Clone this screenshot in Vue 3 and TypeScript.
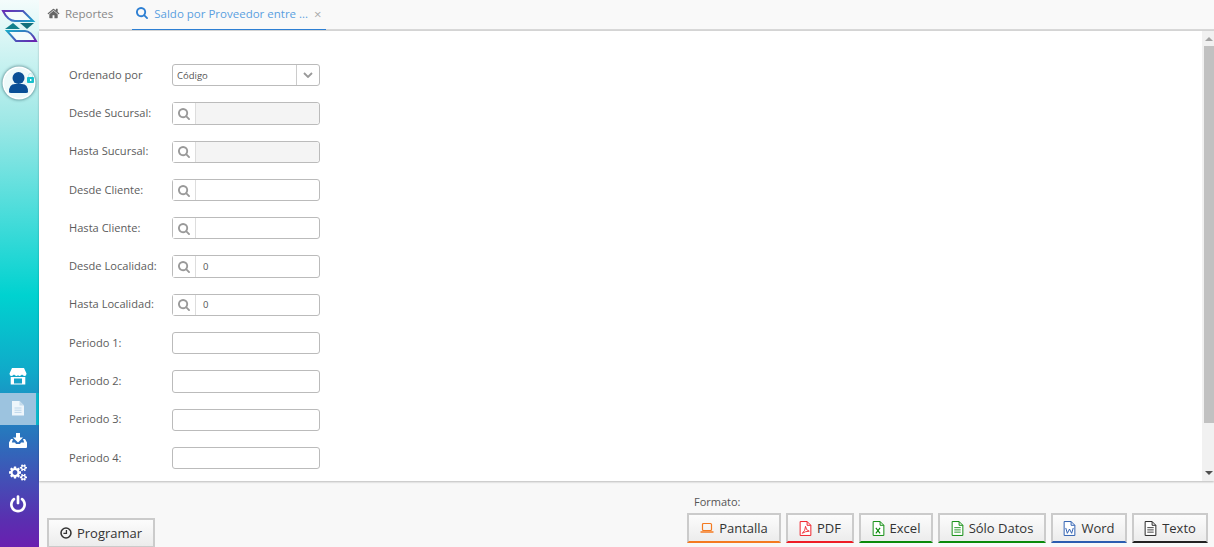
<template>
  <div class="app">
    <aside class="sidebar">
      <svg class="logo" viewBox="0 0 39 44" width="39" height="44">
        <defs>
          <linearGradient id="lg1" x1="0" y1="0" x2="1" y2="1">
            <stop offset="0" stop-color="#6a2bb5" />
            <stop offset="1" stop-color="#1ba0c8" />
          </linearGradient>
          <linearGradient id="lg2" x1="0" y1="0" x2="1" y2="1">
            <stop offset="0" stop-color="#1ba8c8" />
            <stop offset="1" stop-color="#6a22b0" />
          </linearGradient>
        </defs>
        <path d="M3 11 H23 L33 21 H15 Q8 21 3 11 Z" fill="#f4fbfb" stroke="url(#lg1)" stroke-width="2" />
        <path d="M7 31 H25 Q31 31 36 41 H16 Z" fill="#f4fbfb" stroke="url(#lg2)" stroke-width="2" />
        <path d="M5 29 L13 23 L20 29 Z" fill="#12808c" />
        <path d="M20 23 H34 L27 29 Z" fill="#12707c" />
      </svg>
      <div class="avatar">
        <svg viewBox="0 0 30 30" width="30" height="30">
          <circle cx="14.500" cy="10" r="6" fill="#0a4f96" />
          <path d="M5 24 Q5 16 11 16 H18 Q24 16 24 24 Q24 25 22 25 H7 Q5 25 5 24 Z" fill="#0a4f96" />
          <rect x="23" y="9" width="7" height="6" rx="1" fill="#19c0cc" />
          <path d="M24.500 9 V7.500 A2 2 0 0 1 28.500 7.500 V9" fill="none" stroke="#bfeeee" stroke-width="1" />
          <rect x="26" y="11" width="1.400" height="2" fill="#fff" />
        </svg>
      </div>
      <div class="spacer"></div>
      <nav class="nav">
        <div class="nav-item">
          <svg viewBox="0 0 18 18" width="18" height="18" fill="#fff">
            <path d="M3 1 H15 L17.500 6.500 Q17.500 9 15.500 9 Q14 9 13 7.600 Q12 9 10.500 9 Q9.500 9 9 8 Q8.500 9 7.500 9 Q6 9 5 7.600 Q4 9 2.500 9 Q0.500 9 0.500 6.500 Z" />
            <path fill-rule="evenodd" d="M1.700 10 H16.300 V17.500 H1.700 Z M5 11.500 V16.500 H13 V11.500 Z" />
          </svg>
        </div>
        <div class="nav-item active">
          <svg viewBox="0 0 14 16" width="14" height="16">
            <path d="M1 1 H8.500 L13 5.500 V15.500 H1 Z" fill="#eef6fb" />
            <path d="M8.500 1 V5.500 H13 Z" fill="#c4dcec" />
            <path d="M3.500 8 H10.500 M3.500 10.200 H10.500 M3.500 12.400 H10.500" stroke="#bcd6ea" stroke-width="1" />
          </svg>
        </div>
        <div class="nav-item">
          <svg viewBox="0 0 18 15" width="18" height="15" fill="#fff">
            <path d="M7 0 H11 V4.500 H14 L9 9.500 L4 4.500 H7 Z" />
            <path d="M0 9.500 L2 6 H4 L2.800 9.500 H6 L7 11 H11 L12 9.500 H15.200 L14 6 H16 L18 9.500 V14 Q18 15 17 15 H1 Q0 15 0 14 Z" />
          </svg>
        </div>
        <div class="nav-item">
          <svg viewBox="0 0 1920 1792" width="18" height="17" fill="#fff">
            <path d="M896 896q0-106-75-181t-181-75-181 75-75 181 75 181 181 75 181-75 75-181zm768 512q0-52-38-90t-90-38-90 38-38 90q0 53 37.500 90.500t90.500 37.500 90.500-37.500 37.500-90.500zm0-1024q0-52-38-90t-90-38-90 38-38 90q0 53 37.500 90.500t90.500 37.500 90.500-37.500 37.500-90.500zm-384 421v185q0 10-7 19.500t-16 10.500l-155 24q-11 35-32 76 34 48 90 115 7 11 7 20 0 12-7 19-23 30-82.500 89.500t-78.500 59.500q-11 0-21-7l-115-90q-37 19-77 31-11 108-23 155-7 24-30 24h-186q-11 0-20-7.500t-10-17.500l-23-153q-34-10-75-31l-118 89q-7 7-20 7-11 0-21-8-144-133-144-160 0-9 7-19 10-14 41-53t47-61q-23-44-35-82l-152-24q-10-1-17-9.500t-7-19.500v-185q0-10 7-19.500t16-10.500l155-24q11-35 32-76-34-48-90-115-7-11-7-20 0-12 7-20 22-30 82-89t79-59q11 0 21 7l115 90q34-18 77-32 11-108 23-154 7-24 30-24h186q11 0 20 7.500t10 17.500l23 153q34 10 75 31l118-89q8-7 20-7 11 0 21 8 144 133 144 160 0 8-7 19-12 16-42 54t-45 60q23 48 34 82l152 23q10 2 17 10.500t7 19.500zm640 533v140q0 16-149 31-12 27-30 52 51 113 51 138 0 4-4 7-122 71-124 71-8 0-46-47t-52-68q-20 2-30 2t-30-2q-14 21-52 68t-46 47q-2 0-124-71-4-3-4-7 0-25 51-138-18-25-30-52-149-15-149-31v-140q0-16 149-31 13-29 30-52-51-113-51-138 0-4 4-7 4-2 35-20t59-34 30-16q8 0 46 46.500t52 67.500q20-2 30-2t30 2q51-71 92-112l6-2q4 0 124 70 4 3 4 7 0 25-51 138 17 23 30 52 149 15 149 31zm0-1024v140q0 16-149 31-12 27-30 52 51 113 51 138 0 4-4 7-122 71-124 71-8 0-46-47t-52-68q-20 2-30 2t-30-2q-14 21-52 68t-46 47q-2 0-124-71-4-3-4-7 0-25 51-138-18-25-30-52-149-15-149-31v-140q0-16 149-31 13-29 30-52-51-113-51-138 0-4 4-7 4-2 35-20t59-34 30-16q8 0 46 46.500t52 67.500q20-2 30-2t30 2q51-71 92-112l6-2q4 0 124 70 4 3 4 7 0 25-51 138 17 23 30 52 149 15 149 31z" />
          </svg>
        </div>
        <div class="nav-item">
          <svg viewBox="0 0 1536 1792" width="16" height="19" fill="#fff">
            <path d="M1536 896q0 156-61 298t-164 245-245 164-298 61-298-61-245-164-164-245-61-298q0-182 80.500-343t226.500-270q43-32 95.500-25t83.500 50q32 42 24.500 94.500t-49.500 84.500q-98 74-151.500 181t-53.500 228q0 104 40.500 198.500t109.500 163.500 163.500 109.500 198.500 40.500 198.500-40.500 163.500-109.500 109.500-163.500 40.500-198.500q0-121-53.500-228t-151.500-181q-42-32-49.500-84.500t24.500-94.500q31-43 84-50t95 25q146 109 226.500 270t80.500 343zm-640-768v640q0 52-38 90t-90 38-90-38-38-90v-640q0-52 38-90t90-38 90 38 38 90z" />
          </svg>
        </div>
      </nav>
    </aside>

    <main class="main">
      <header class="tabs">
        <div class="tab">
          <svg viewBox="0 0 1792 1792" width="13" height="13" fill="#666">
            <path d="M1472 992v480q0 26-19 45t-45 19h-384v-384h-256v384h-384q-26 0-45-19t-19-45v-480q0-1 .5-3t.5-3l575-474 575 474q1 2 1 6zm223-69l-62 74q-8 9-21 11h-3q-13 0-21-7l-692-577-692 577q-12 8-24 7-13-2-21-11l-62-74q-8-10-7-23.500t11-21.500l719-599q32-26 76-26t76 26l244 204v-195q0-14 9-23t23-9h192q14 0 23 9t9 23v408l219 182q10 8 11 21.500t-7 23.500z" />
          </svg>
          <span>Reportes</span>
        </div>
        <div class="tab active">
          <svg viewBox="0 0 1664 1792" width="12" height="13" fill="#2d7fd3">
            <path :d="searchPath" />
          </svg>
          <span>Saldo por Proveedor entre ...</span>
          <span class="tab-close">×</span>
        </div>
      </header>

      <section class="body">
        <div class="form">
          <div class="row">
            <label>Ordenado por</label>
            <div class="select">
              <span class="select-value">Código</span>
              <span class="select-arrow">
                <svg viewBox="0 0 10 6" width="10" height="6">
                  <path d="M1 1 L5 5 L9 1" fill="none" stroke="#999" stroke-width="1.800" />
                </svg>
              </span>
            </div>
          </div>
          <div v-for="f in lookups" :key="f.label" class="row">
            <label>{{ f.label }}</label>
            <div class="lookup" :class="{ disabled: f.disabled }">
              <span class="lookup-icon">
                <svg viewBox="0 0 1664 1792" width="12" height="13" fill="#999">
                  <path :d="searchPath" />
                </svg>
              </span>
              <span class="lookup-value">{{ f.value }}</span>
            </div>
          </div>
          <div v-for="p in periods" :key="p" class="row">
            <label>{{ p }}</label>
            <div class="input"></div>
          </div>
        </div>
        <div class="scrollbar">
          <span class="arrow up"></span>
          <div class="thumb"></div>
          <span class="arrow down"></span>
        </div>
      </section>

      <footer class="footer">
        <button class="btn program">
          <svg viewBox="0 0 14 14" width="12" height="12">
            <circle cx="7" cy="7" r="5.800" fill="none" stroke="#333" stroke-width="1.800" />
            <path d="M7.500 3.500 V7.500 H4" fill="none" stroke="#333" stroke-width="1.500" />
          </svg>
          Programar
        </button>
        <div class="formats">
          <div class="formats-label">Formato:</div>
          <div class="formats-row">
            <button v-for="b in formats" :key="b.label" class="btn fmt" :style="{ borderBottomColor: b.color, width: b.width + 'px' }">
              <svg v-if="b.kind === 'screen'" viewBox="0 0 14 12" width="14" height="12">
                <rect x="2.500" y="1.500" width="9" height="7" rx="1" fill="none" stroke="#f47a20" stroke-width="1.200" />
                <path d="M0.500 10 H13.500" stroke="#f47a20" stroke-width="1.500" />
              </svg>
              <svg v-else viewBox="0 0 12 14" width="13" height="15">
                <path d="M1 .5 H7.500 L11 4 V13.500 H1 Z" fill="#fff" :stroke="b.color" stroke-width=".9" />
                <path d="M7.500 .5 V4 H11" fill="none" :stroke="b.color" stroke-width=".9" />
                <path v-if="b.kind === 'pdf'" d="M3 11.500 Q6 9 6 5 Q6.500 9 9.500 9.500 Q6 9.500 3 11.500 Z" fill="none" :stroke="b.color" stroke-width=".8" />
                <path v-else-if="b.kind === 'xls'" d="M3.500 6.500 L7.500 11.500 M7.500 6.500 L3.500 11.500" :stroke="b.color" stroke-width="1.100" />
                <path v-else-if="b.kind === 'doc'" d="M2.500 6.500 L4 11.500 L6 7.500 L8 11.500 L9.500 6.500" fill="none" :stroke="b.color" stroke-width=".9" />
                <path v-else d="M3 6.200 H9 M3 8.300 H9 M3 10.400 H9" :stroke="b.color" stroke-width=".8" />
              </svg>
              <span>{{ b.label }}</span>
            </button>
          </div>
        </div>
      </footer>
    </main>
  </div>
</template>

<script setup lang="ts">
const searchPath =
  'M1152 704q0-185-131.500-316.500t-316.500-131.500-316.500 131.500-131.500 316.500 131.500 316.500 316.500 131.500 316.500-131.500 131.500-316.500zm512 832q0 52-38 90t-90 38q-54 0-90-38l-343-342q-179 124-399 124-143 0-273.500-55.500t-225-150-150-225-55.500-273.500 55.500-273.500 150-225 225-150 273.500-55.500 273.500 55.500 225 150 150 225 55.500 273.500q0 220-124 399l343 343q37 37 37 90z'

const lookups = [
  { label: 'Desde Sucursal:', value: '', disabled: true },
  { label: 'Hasta Sucursal:', value: '', disabled: true },
  { label: 'Desde Cliente:', value: '', disabled: false },
  { label: 'Hasta Cliente:', value: '', disabled: false },
  { label: 'Desde Localidad:', value: '0', disabled: false },
  { label: 'Hasta Localidad:', value: '0', disabled: false }
]

const periods = ['Periodo 1:', 'Periodo 2:', 'Periodo 3:', 'Periodo 4:']

const formats = [
  { label: 'Pantalla', kind: 'screen', color: '#f47a20', width: 94 },
  { label: 'PDF', kind: 'pdf', color: '#ee1c25', width: 68 },
  { label: 'Excel', kind: 'xls', color: '#0a8a0a', width: 74 },
  { label: 'Sólo Datos', kind: 'txt', color: '#0a8a0a', width: 108 },
  { label: 'Word', kind: 'doc', color: '#2b5db0', width: 76 },
  { label: 'Texto', kind: 'txt', color: '#222222', width: 76 }
]
</script>

<style>
html,
body {
  margin: 0;
  overflow: hidden;
}
</style>

<style scoped>
.app {
  display: flex;
  width: 1214px;
  height: 547px;
  overflow: hidden;
  font-family: "Open Sans", sans-serif;
  color: #555;
  background: #f8f8f8;
}

.sidebar {
  width: 39px;
  flex-shrink: 0;
  display: flex;
  flex-direction: column;
  background: linear-gradient(180deg, #f4fcfc 0%, #9fe8e6 22%, #00d2d0 54%, #10a9c9 68%, #2a72bc 80%, #5a2fb0 95%, #6a1fb0 100%);
}
.logo {
  display: block;
  margin-bottom: 24px;
}
.avatar {
  width: 30px;
  height: 30px;
  margin-left: 3.500px;
  border-radius: 50%;
  background: #eefafa;
  box-shadow: 0 0 0 1.500px #fff, 0 0 3px 2px rgba(20, 70, 80, 0.6);
}
.spacer {
  flex: 1;
}
.nav {
  padding-bottom: 26px;
}
.nav-item {
  height: 32px;
  display: flex;
  align-items: center;
  justify-content: center;
  width: 36px;
  border-right: 3px solid transparent;
}
.nav-item svg {
  margin-bottom: 1.500px;
}
.nav-item.active {
  background: #9cc3df;
  border-right-color: #0ab8cc;
}

.main {
  flex: 1;
  min-width: 0;
  display: flex;
  flex-direction: column;
}

.tabs {
  height: 29px;
  flex-shrink: 0;
  display: flex;
  gap: 18px;
  padding-left: 7px;
  background: #f9f9f9;
  border-bottom: 2px solid #d8d8d8;
  font-size: 11.500px;
}
.tab {
  display: flex;
  align-items: center;
  gap: 5px;
  height: 30px;
  box-sizing: border-box;
  padding: 0 1px 4px 1px;
  color: #888;
}
.tab.active {
  gap: 6px;
  color: #5a9fe0;
  border-bottom: 1px solid #2d7fd3;
  padding: 0 4px 3px 4px;
}
.tab-close {
  padding-top: 2px;
  color: #aaa;
  font-size: 13px;
}

.body {
  flex: 1;
  min-height: 0;
  display: flex;
  background: #fff;
  box-shadow: 0 1px 2px rgba(0, 0, 0, 0.25);
}
.form {
  flex: 1;
  padding: 33px 0 0 30px;
}
.row {
  display: flex;
  align-items: center;
  height: 22.300px;
  margin-bottom: 16px;
}
.row label {
  width: 103px;
  flex-shrink: 0;
  padding-bottom: 2px;
  font-size: 11.100px;
  color: #5c5c5c;
}
.select,
.lookup,
.input {
  width: 148px;
  height: 100%;
  box-sizing: border-box;
  border: 1px solid #bbb;
  border-radius: 3px;
  display: flex;
  font-size: 9.500px;
  color: #555;
  background: #fff;
}
.select-value {
  flex: 1;
  display: flex;
  align-items: center;
  padding-left: 4px;
}
.select-arrow {
  width: 22px;
  display: flex;
  align-items: center;
  justify-content: center;
  border-left: 1px solid #ccc;
}
.lookup.disabled .lookup-value {
  background: #f4f4f4;
}
.lookup-icon {
  width: 23px;
  flex-shrink: 0;
  display: flex;
  align-items: center;
  justify-content: center;
  padding-top: 2px;
  box-sizing: border-box;
  background: #fff;
  border-right: 1px solid #ddd;
}
.lookup-value {
  flex: 1;
  display: flex;
  align-items: center;
  padding-left: 7px;
  border-radius: 0 3px 3px 0;
}

.scrollbar {
  width: 12px;
  flex-shrink: 0;
  box-sizing: border-box;
  padding-left: 2px;
  display: flex;
  flex-direction: column;
  align-items: center;
  background: #f1f1f1;
}
.arrow {
  width: 0;
  height: 0;
  border-left: 4px solid transparent;
  border-right: 4px solid transparent;
}
.arrow.up {
  margin-top: 6px;
  border-bottom: 4px solid #a3a3a3;
}
.arrow.down {
  margin-top: 48px;
  border-top: 4px solid #505050;
}
.thumb {
  width: 100%;
  height: 377px;
  margin-top: 5px;
  background: #c1c1c1;
}

.footer {
  height: 66px;
  flex-shrink: 0;
  display: flex;
  justify-content: space-between;
  padding: 0 6px 0 8px;
  box-sizing: border-box;
}
.btn {
  font-family: "Open Sans", sans-serif;
  font-size: 13px;
  color: #333;
  display: flex;
  align-items: center;
  justify-content: center;
  gap: 5px;
  box-sizing: border-box;
  padding: 0;
  border: 2px solid #cbcbcb;
  background: linear-gradient(180deg, #fcfcfc, #ececec);
}
.program {
  width: 108px;
  height: 30px;
  margin-top: 37px;
}
.formats {
  display: flex;
  flex-direction: column;
}
.formats-label {
  font-size: 11px;
  color: #555;
  margin: 13px 0 3px 7px;
  line-height: 16px;
}
.formats-row {
  display: flex;
  gap: 5px;
}
.fmt {
  height: 30px;
}
</style>
